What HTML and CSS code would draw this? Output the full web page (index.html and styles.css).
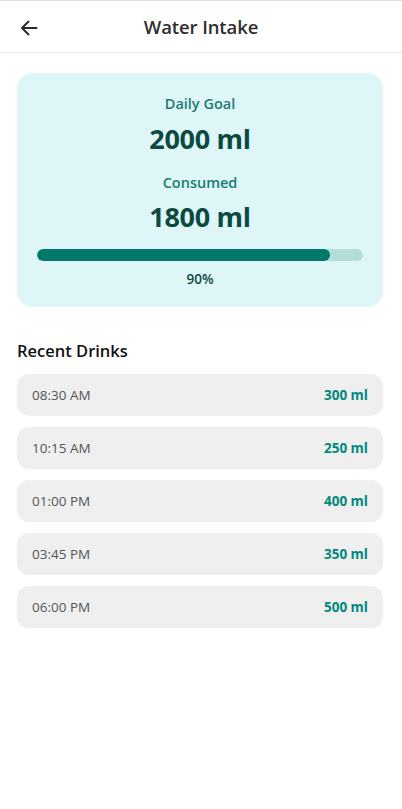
FILE: index.html
```html
<!DOCTYPE html>
<html>
<head>
<meta charset="utf-8">
<link rel="stylesheet" href="styles.css">
</head>
<body>
<div class="app">
  <header class="header">
    <button class="back" aria-label="Back">
      <svg width="20" height="20" viewBox="0 0 20 20"><path d="M17.5 10H3M9.5 3.5L3 10l6.5 6.5" fill="none" stroke="#2b2b2b" stroke-width="2" stroke-linecap="round" stroke-linejoin="round"/></svg>
    </button>
    <h1 class="title">Water Intake</h1>
  </header>
  <main class="content">
    <section class="summary">
      <div class="label">Daily Goal</div>
      <div class="value">2000 ml</div>
      <div class="label second">Consumed</div>
      <div class="value second">1800 ml</div>
      <div class="track"><div class="fill" style="width:90%"></div></div>
      <div class="percent">90%</div>
    </section>
    <h2 class="section-title">Recent Drinks</h2>
    <ul class="drinks">
      <li class="drink"><span class="time">08:30 AM</span><span class="amount">300 ml</span></li>
      <li class="drink"><span class="time">10:15 AM</span><span class="amount">250 ml</span></li>
      <li class="drink"><span class="time">01:00 PM</span><span class="amount">400 ml</span></li>
      <li class="drink"><span class="time">03:45 PM</span><span class="amount">350 ml</span></li>
      <li class="drink"><span class="time">06:00 PM</span><span class="amount">500 ml</span></li>
    </ul>
  </main>
</div>
</body>
</html>
```
FILE: styles.css
```css
* { box-sizing: border-box; }
body {
  margin: 0;
  font-family: "Open Sans", "Noto Sans", sans-serif;
  background: #fff;
  color: #222;
}
.app {
  border-top: 1px solid #e0e0e0;
}
.header {
  height: 52px;
  border-bottom: 1px solid #e8e8e8;
  display: flex;
  align-items: center;
  justify-content: center;
  position: relative;
}
.back {
  position: absolute;
  left: 18px;
  top: 16px;
  width: 22px;
  height: 22px;
  padding: 0;
  border: none;
  background: none;
  display: flex;
  align-items: center;
  justify-content: center;
}
.title {
  margin: 0;
  font-size: 18.5px;
  font-weight: 600;
  color: #2e2e2e;
  letter-spacing: -0.1px;
}
.content {
  padding: 20px 19px 20px 17px;
}
.summary {
  background: #dff6f8;
  border-radius: 16px;
  padding: 20px 20px 19px;
  display: flex;
  flex-direction: column;
  align-items: center;
}
.label {
  font-size: 14.5px;
  font-weight: 600;
  color: #1a7c70;
  line-height: 22px;
}
.label.second { margin-top: 15px; }
.value {
  font-size: 27px;
  font-weight: 700;
  color: #0b4a40;
  line-height: 36px;
  margin-top: 6px;
  letter-spacing: -0.3px;
}
.value.second { margin-top: 5px; }
.track {
  width: 100%;
  height: 12px;
  background: #b2dfdb;
  border-radius: 6px;
  margin-top: 14px;
  overflow: hidden;
}
.fill {
  height: 100%;
  background: #00796b;
  border-radius: 6px;
}
.percent {
  margin-top: 9px;
  font-size: 13.5px;
  font-weight: 600;
  color: #0b4a40;
  line-height: 18px;
}
.section-title {
  margin: 33px 0 12px;
  font-size: 16.5px;
  font-weight: 600;
  color: #111;
  line-height: 22px;
}
.drinks {
  list-style: none;
  margin: 0;
  padding: 0;
  display: flex;
  flex-direction: column;
  gap: 11px;
}
.drink {
  height: 42px;
  background: #efefef;
  border-radius: 12px;
  padding: 0 15px;
  display: flex;
  align-items: center;
  justify-content: space-between;
  font-size: 13.5px;
}
.time {
  color: #555;
}
.amount {
  color: #00897b;
  font-weight: 700;
}
```
